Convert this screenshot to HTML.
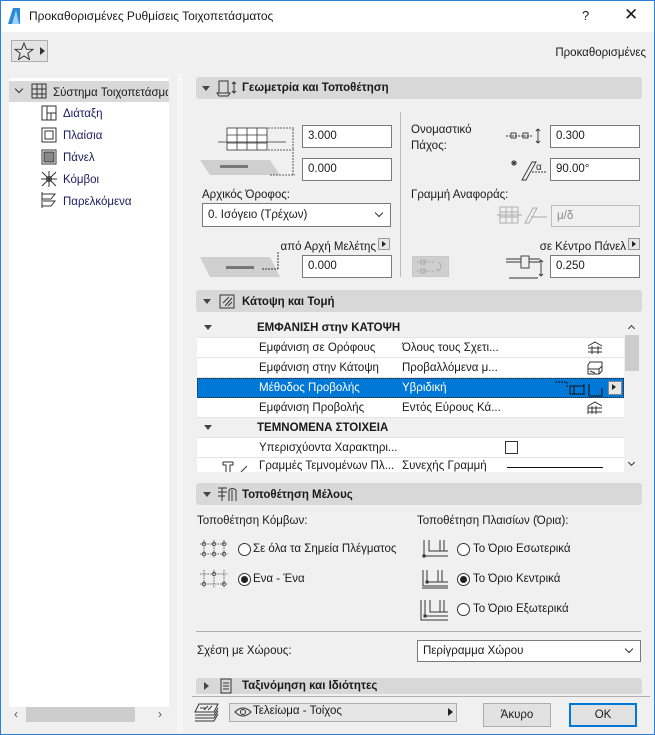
<!DOCTYPE html>
<html><head><meta charset="utf-8">
<style>
*{box-sizing:border-box;margin:0;padding:0}
body{width:655px;height:735px;overflow:hidden;font-family:"Liberation Sans","DejaVu Sans",sans-serif;font-size:11.5px;color:#1a1a1a;background:#f0f0f0;position:relative}
.a{position:absolute;white-space:nowrap}
.win{position:absolute;left:0;top:0;width:655px;height:735px;border:1px solid #2b7fd6}
.tb{position:absolute;left:1px;top:1px;width:653px;height:31px;background:#fff}
.inp{position:absolute;background:#fff;border:1px solid #7a7a7a;height:23px;padding:4px 0 0 5px;font-size:11.5px}
.sec{position:absolute;left:196px;width:446px;background:#d8d8d8;border-radius:3px;font-weight:bold}
.tri{position:absolute;width:0;height:0;border-left:4px solid transparent;border-right:4px solid transparent;border-top:5px solid #444}
.trr{position:absolute;width:0;height:0;border-top:4px solid transparent;border-bottom:4px solid transparent;border-left:5px solid #444}
.row{position:absolute;left:197px;width:427px;height:20px;border-bottom:1px solid #e4e4e4;background:#fff}
.row span{position:absolute;top:4px;white-space:nowrap}
.hrow{background:#f0f0f0;font-weight:bold}
.radio{position:absolute;width:13px;height:13px;border:1px solid #333;border-radius:50%;background:#fff}
.radio.on::after{content:"";position:absolute;left:2px;top:2px;width:7px;height:7px;border-radius:50%;background:#222}
.abtn{position:absolute;width:12px;height:12px;border:1px solid #999;background:#e6e6e6}
.abtn::after{content:"";position:absolute;left:3px;top:2px;border-top:3px solid transparent;border-bottom:3px solid transparent;border-left:4px solid #222}
.chev{position:absolute;width:7px;height:7px;border-right:1px solid #333;border-bottom:1px solid #333;transform:rotate(45deg)}
</style></head><body>
<div class="win"></div>
<div class="tb"></div>
<svg class="a" style="left:7px;top:7px" width="14" height="18"><path d="M1 17 L6 1 L13 1 L13 17 Z" fill="#2a8ad8"/><path d="M5 17 L9 3 L12 17 Z" fill="#9fd3f5"/></svg>
<div class="a" style="left:29px;top:9px;font-size:12px">Προκαθορισμένες Ρυθμίσεις Τοιχοπετάσματος</div>
<div class="a" style="left:582px;top:8px;font-size:13px">?</div>
<div class="a" style="left:624px;top:5px;font-size:17px;font-weight:300">✕</div>

<div class="a" style="left:11px;top:40px;width:37px;height:22px;border:1px solid #adadad;background:#e4e4e4"></div>
<svg class="a" style="left:14px;top:42px" width="20" height="18"><path d="M10 1L12.4 7.2L19 7.4L13.8 11.4L15.6 17.6L10 14L4.4 17.6L6.2 11.4L1 7.4L7.6 7.2Z" fill="none" stroke="#333"/></svg>
<div class="trr" style="left:40px;top:47px;border-left-color:#333"></div>
<div class="a" style="right:9px;top:47px">Προκαθορισμένες</div>

<!-- left panel -->
<div class="a" style="left:9px;top:78px;width:160px;height:629px;background:#fff"></div>
<div class="a" style="left:9px;top:81px;width:160px;height:21px;background:#d9d9d9"></div>
<div class="chev" style="left:16px;top:86px;width:6px;height:6px"></div>
<svg class="a" style="left:30px;top:82px" width="18" height="18"><g fill="none" stroke="#333"><rect x="2" y="2" width="14" height="14"/><path d="M2 7H16M2 12H16M7 2V16M12 2V16"/></g></svg>
<div class="a" style="left:53px;top:87px;width:115px;overflow:hidden">Σύστημα Τοιχοπετάσματος</div>
<svg class="a" style="left:40px;top:104px" width="140" height="110"><g fill="none" stroke="#333"><rect x="2" y="2" width="14" height="14"/><path d="M7 2V16M7 9H16M11 9V16"/>
<rect x="2" y="24" width="14" height="14"/><rect x="5" y="27" width="8" height="8"/>
<rect x="2" y="46" width="14" height="14"/><rect x="4" y="48" width="10" height="10" fill="#888"/>
<circle cx="9" cy="75" r="2.5"/><path d="M2 68L16 82M16 68L2 82M9 67V83M1 75H17"/>
<path d="M2 90H15L11 95H2M3 97H15L11 102H2M2 88V104"/></g></svg>
<div class="a" style="left:63px;top:108px;color:#1a1a60">Διάταξη</div>
<div class="a" style="left:63px;top:130px;color:#1a1a60">Πλαίσια</div>
<div class="a" style="left:63px;top:152px;color:#1a1a60">Πάνελ</div>
<div class="a" style="left:63px;top:174px;color:#1a1a60">Κόμβοι</div>
<div class="a" style="left:63px;top:196px;color:#1a1a60">Παρελκόμενα</div>
<div class="a" style="left:9px;top:707px;width:160px;height:15px;background:#f0f0f0"></div>
<div class="a" style="left:26px;top:707px;width:109px;height:15px;background:#cdcdcd"></div>
<div class="a" style="left:14px;top:707px;font-size:12px;color:#555">‹</div>
<div class="a" style="left:158px;top:707px;font-size:12px;color:#555">›</div>
<div class="a" style="left:177px;top:73px;width:6px;height:660px;background:#f6f6f6"></div>

<!-- section 1 -->
<div class="sec" style="top:77px;height:22px"></div>
<div class="tri" style="left:202px;top:86px"></div>
<svg class="a" style="left:216px;top:79px" width="22" height="18"><g fill="none" stroke="#333"><rect x="3" y="2" width="9" height="12"/><path d="M1 14H14L12 17H3Z"/><path d="M18 3V14M16 5L18 3L20 5M16 12L18 14L20 12"/></g></svg>
<div class="a" style="left:242px;top:82px;font-weight:bold">Γεωμετρία και Τοποθέτηση</div>

<svg class="a" style="left:200px;top:125px" width="100" height="65"><polygon points="0,35 70,35 80,50 10,50" fill="#cfcfcf"/><rect x="20" y="40" width="28" height="3" fill="#777"/><g fill="none" stroke="#333" stroke-width="0.8"><rect x="27" y="3" width="40" height="22" fill="#fff"/><path d="M37 3V25M47 3V25M57 3V25M27 10H67M27 18H67M18 17H86"/><path d="M68 3H95M68 25H95M93 4V24M93 27V50M70 50H95" stroke-dasharray="2 1"/></g></svg>
<div class="inp" style="left:302px;top:125px;width:90px">3.000</div>
<div class="inp" style="left:302px;top:158px;width:90px">0.000</div>
<div class="a" style="left:202px;top:189px">Αρχικός Όροφος:</div>
<div class="inp" style="left:202px;top:203px;width:189px;height:24px;padding-top:5px">0. Ισόγειο (Τρέχων)</div>
<div class="chev" style="left:376px;top:210px;width:6px;height:6px"></div>
<div class="a" style="right:279px;top:241px">από Αρχή Μελέτης</div>
<div class="abtn" style="left:378px;top:238px"></div>
<svg class="a" style="left:200px;top:252px" width="100" height="28"><polygon points="0,5 70,5 80,25 10,25" fill="#cfcfcf"/><rect x="26" y="14" width="28" height="3" fill="#777"/><path d="M62 17H78M78 0V17" fill="none" stroke="#333" stroke-dasharray="2 1"/></svg>
<div class="inp" style="left:302px;top:255px;width:90px">0.000</div>
<div class="a" style="left:400px;top:112px;width:1px;height:165px;background:#bbb"></div>

<div class="a" style="left:411px;top:122px;line-height:16px">Ονομαστικό<br>Πάχος:</div>
<svg class="a" style="left:505px;top:126px" width="42" height="22"><g fill="none" stroke="#333" stroke-width="0.9"><path d="M1 10H28" stroke-dasharray="2 1"/><rect x="6" y="7" width="5" height="5"/><rect x="18" y="7" width="5" height="5"/><path d="M33 3V17M31 5L33 3L35 5M31 15L33 17L35 15"/></g></svg>
<div class="inp" style="left:550px;top:125px;width:90px">0.300</div>
<svg class="a" style="left:510px;top:158px" width="38" height="24"><g fill="none" stroke="#333" stroke-width="0.9"><path d="M4 2V8M1 5H7M2 3L6 7M6 3L2 7"/><path d="M12 22L22 4L26 4L16 22Z"/><path d="M22 14H36" stroke-dasharray="2 1"/></g><text x="26" y="12" font-size="10" fill="#333" font-family="Liberation Sans">α</text></svg>
<div class="inp" style="left:550px;top:158px;width:90px">90.00°</div>
<div class="a" style="left:411px;top:189px">Γραμμή Αναφοράς:</div>
<svg class="a" style="left:497px;top:205px" width="52" height="22"><g fill="none" stroke="#aaa" stroke-width="0.9"><rect x="3" y="2" width="18" height="16"/><path d="M9 2V18M15 2V18M3 7H21M3 12H21M0 10H25"/><path d="M28 18L36 3L40 3L32 18ZM34 12H50" /></g></svg>
<div class="inp" style="left:551px;top:205px;width:89px;height:22px;background:#f0f0f0;border-color:#bcbcbc;color:#888">μ/δ</div>
<div class="a" style="right:29px;top:241px">σε Κέντρο Πάνελ</div>
<div class="abtn" style="left:628px;top:238px"></div>
<div class="a" style="left:412px;top:256px;width:37px;height:21px;background:#cfcfcf;border:1px solid #c8c8c8"></div>
<svg class="a" style="left:414px;top:258px" width="34" height="18"><g fill="none" stroke="#aaa"><path d="M3 4H20M3 13H20" stroke-dasharray="2 1"/><rect x="7" y="2" width="4" height="4"/><rect x="7" y="11" width="4" height="4"/><path d="M24 4Q30 8 24 13M22 11L24 13L26 11"/></g></svg>
<svg class="a" style="left:505px;top:254px" width="42" height="26"><g fill="none" stroke="#333" stroke-width="0.9"><path d="M1 5H16M24 5H35M1 8H16M24 8H35"/><rect x="16" y="2" width="8" height="12"/><path d="M36 6V22M34 8L36 6L38 8M34 20L36 22L38 20M4 24H33" /></g></svg>
<div class="inp" style="left:550px;top:255px;width:90px">0.250</div>

<!-- section 2 -->
<div class="sec" style="top:290px;height:22px"></div>
<div class="tri" style="left:203px;top:299px"></div>
<svg class="a" style="left:217px;top:292px" width="20" height="18"><g fill="none" stroke="#333"><path d="M3 3H17V16H3Z"/><path d="M8 14L15 6M11 14L15 10M6 11L12 5"/></g></svg>
<div class="a" style="left:242px;top:296px;font-weight:bold">Κάτοψη και Τομή</div>

<div class="row hrow" style="top:318px"><div class="tri" style="left:7px;top:7px"></div><span style="left:60px">ΕΜΦΑΝΙΣΗ στην ΚΑΤΟΨΗ</span></div>
<div class="row" style="top:338px"><span style="left:62px">Εμφάνιση σε Ορόφους</span><span style="left:205px">Όλους τους Σχετι...</span><svg class="a" style="left:390px;top:3px" width="16" height="14"><path d="M1 5L8 1L15 5M1 7H15M1 11H15M5 5V13M11 5V13" fill="none" stroke="#333"/></svg></div>
<div class="row" style="top:358px"><span style="left:62px">Εμφάνιση στην Κάτοψη</span><span style="left:205px">Προβαλλόμενα μ...</span><svg class="a" style="left:390px;top:3px" width="16" height="14"><path d="M3 1H15V5L12 8H1V4ZM1 8V13H12V8M15 5V10L12 13M3 10L8 12" fill="none" stroke="#333"/></svg></div>
<div class="row" style="top:378px;background:#0078d7;color:#fff;border:1px dotted #222"><span style="left:61px;top:3px">Μέθοδος Προβολής</span><span style="left:204px;top:3px">Υβριδική</span><svg class="a" style="left:356px;top:1px" width="50" height="17"><g fill="none" stroke="#111"><path d="M1 2H13V8" stroke-dasharray="2 1"/><path d="M16 6H30V14H16ZM20 6V14M30 4V8M35 4V16H48V8"/></g></svg><div class="abtn" style="left:410px;top:2px;width:14px;height:14px;border-color:#888"></div></div>
<div class="row" style="top:398px"><span style="left:62px">Εμφάνιση Προβολής</span><span style="left:205px">Εντός Εύρους Κά...</span><svg class="a" style="left:390px;top:3px" width="16" height="14"><path d="M1 5L8 1L15 5M1 5V13M1 7H15M1 11H15M5 5V13M9 5V13" fill="none" stroke="#333"/></svg></div>
<div class="row hrow" style="top:418px"><div class="tri" style="left:7px;top:7px"></div><span style="left:60px">ΤΕΜΝΟΜΕΝΑ ΣΤΟΙΧΕΙΑ</span></div>
<div class="row" style="top:438px"><span style="left:62px">Υπερισχύοντα Χαρακτηρι...</span><div class="a" style="left:308px;top:3px;width:13px;height:13px;border:1px solid #333"></div></div>
<div class="row" style="top:458px;height:14px;overflow:hidden;border:none"><span style="left:62px;top:2px;width:140px;overflow:hidden">Γραμμές Τεμνομένων Πλ...</span><span style="left:205px;top:2px">Συνεχής Γραμμή</span><div class="a" style="left:310px;top:9px;width:96px;height:1px;background:#111"></div><svg class="a" style="left:24px;top:2px" width="30" height="14"><path d="M2 2H12M2 2V5H5V12M12 2V5H9V12M20 12L26 6" fill="none" stroke="#333"/></svg></div>
<div class="a" style="left:624px;top:318px;width:16px;height:154px;background:#f0f0f0"></div>
<div class="a" style="left:625px;top:335px;width:14px;height:36px;background:#cdcdcd"></div>
<div class="chev" style="left:629px;top:326px;width:5px;height:5px;transform:rotate(-135deg)"></div>
<div class="chev" style="left:629px;top:460px;width:5px;height:5px"></div>

<!-- section 3 -->
<div class="sec" style="top:483px;height:22px"></div>
<div class="tri" style="left:203px;top:492px"></div>
<svg class="a" style="left:217px;top:485px" width="22" height="18"><g fill="none" stroke="#333"><path d="M1 3H10M1 7H10M1 11H8M5 3V16M12 16V5Q15 2 19 5V16M15 5V16"/></g></svg>
<div class="a" style="left:242px;top:489px;font-weight:bold">Τοποθέτηση Μέλους</div>

<div class="a" style="left:197px;top:515px">Τοποθέτηση Κόμβων:</div>
<div class="a" style="left:417px;top:515px">Τοποθέτηση Πλαισίων (Όρια):</div>
<svg class="a" style="left:200px;top:540px" width="36" height="50"><g fill="none" stroke="#444" stroke-width="0.8"><g><circle cx="4" cy="4" r="1.8"/><circle cx="14" cy="4" r="1.8"/><circle cx="24" cy="4" r="1.8"/><circle cx="4" cy="14" r="1.8"/><circle cx="14" cy="14" r="1.8"/><circle cx="24" cy="14" r="1.8"/><path d="M0 4H28M0 14H28M4 0V18M14 0V18M24 0V18" stroke-dasharray="1.5 1"/></g><g transform="translate(0,30)"><circle cx="14" cy="4" r="1.8"/><circle cx="4" cy="14" r="1.8"/><circle cx="24" cy="14" r="1.8"/><path d="M0 4H28M0 14H28M4 0V18M14 0V18M24 0V18" stroke-dasharray="1.5 1"/></g></g></svg>
<div class="radio" style="left:238px;top:543px"></div>
<div class="a" style="left:253px;top:543px">Σε όλα τα Σημεία Πλέγματος</div>
<div class="radio on" style="left:238px;top:573px"></div>
<div class="a" style="left:253px;top:573px">Ενα - Ένα</div>

<svg class="a" style="left:420px;top:538px" width="32" height="84"><g fill="none" stroke="#333"><path d="M4 2V18H28M9 2V13H28M20 2V13M24 2V13"/><rect x="3" y="17" width="2" height="2" fill="#333"/>
<path d="M3 32V48H28M7 32V44H28M18 32V44M22 32V44M2 50H28" /><rect x="6" y="43" width="2" height="2" fill="#333"/>
<path d="M5 62V78H28M10 62V74H28M20 62V74M24 62V74M1 62V82H28"/><rect x="4" y="77" width="2" height="2" fill="#333"/></g></svg>
<div class="radio" style="left:457px;top:543px"></div>
<div class="a" style="left:473px;top:543px">Το Όριο Εσωτερικά</div>
<div class="radio on" style="left:457px;top:573px"></div>
<div class="a" style="left:473px;top:573px">Το Όριο Κεντρικά</div>
<div class="radio" style="left:457px;top:603px"></div>
<div class="a" style="left:473px;top:603px">Το Όριο Εξωτερικά</div>

<div class="a" style="left:196px;top:631px;width:445px;height:1px;background:#b0b0b0"></div>
<div class="a" style="left:197px;top:645px">Σχέση με Χώρους:</div>
<div class="inp" style="left:417px;top:640px;width:224px;height:22px;padding-top:4px">Περίγραμμα Χώρου</div>
<div class="chev" style="left:626px;top:646px;width:6px;height:6px"></div>

<!-- section 4 -->
<div class="sec" style="top:678px;height:16px;border-radius:3px 3px 0 0"></div>
<div class="trr" style="left:204px;top:682px"></div>
<svg class="a" style="left:219px;top:678px" width="14" height="16"><path d="M2 1H12V15H2ZM4 5H10M4 8H10M4 11H10" fill="none" stroke="#333"/></svg>
<div class="a" style="left:242px;top:680px;font-weight:bold">Ταξινόμηση και Ιδιότητες</div>
<div class="a" style="left:192px;top:696px;width:458px;height:1px;background:#b0b0b0"></div>

<!-- bottom -->
<svg class="a" style="left:194px;top:702px" width="26" height="20"><g fill="none" stroke="#333"><path d="M5 2H24L20 10H1ZM1 13H20L24 6M1 16H20L24 9M1 19H20L24 12M6 6H12M14 4L10 8M18 4L14 8"/></g></svg>
<div class="a" style="left:229px;top:703px;width:228px;height:19px;border:1px solid #acacac;background:#e6e6e6"></div>
<svg class="a" style="left:234px;top:706px" width="18" height="12"><path d="M1 6Q9 -2 17 6Q9 14 1 6Z" fill="none" stroke="#333"/><circle cx="9" cy="6" r="2.5" fill="none" stroke="#333"/></svg>
<div class="a" style="left:253px;top:705px">Τελείωμα - Τοίχος</div>
<div class="trr" style="left:448px;top:708px;border-left-color:#222"></div>
<div class="a" style="left:483px;top:703px;width:68px;height:24px;border:1px solid #adadad;background:#e1e1e1;text-align:center;padding-top:5px">Άκυρο</div>
<div class="a" style="left:569px;top:703px;width:68px;height:24px;border:2px solid #0078d7;background:#e1e1e1;text-align:center;padding-top:4px">OK</div>
</body></html>
